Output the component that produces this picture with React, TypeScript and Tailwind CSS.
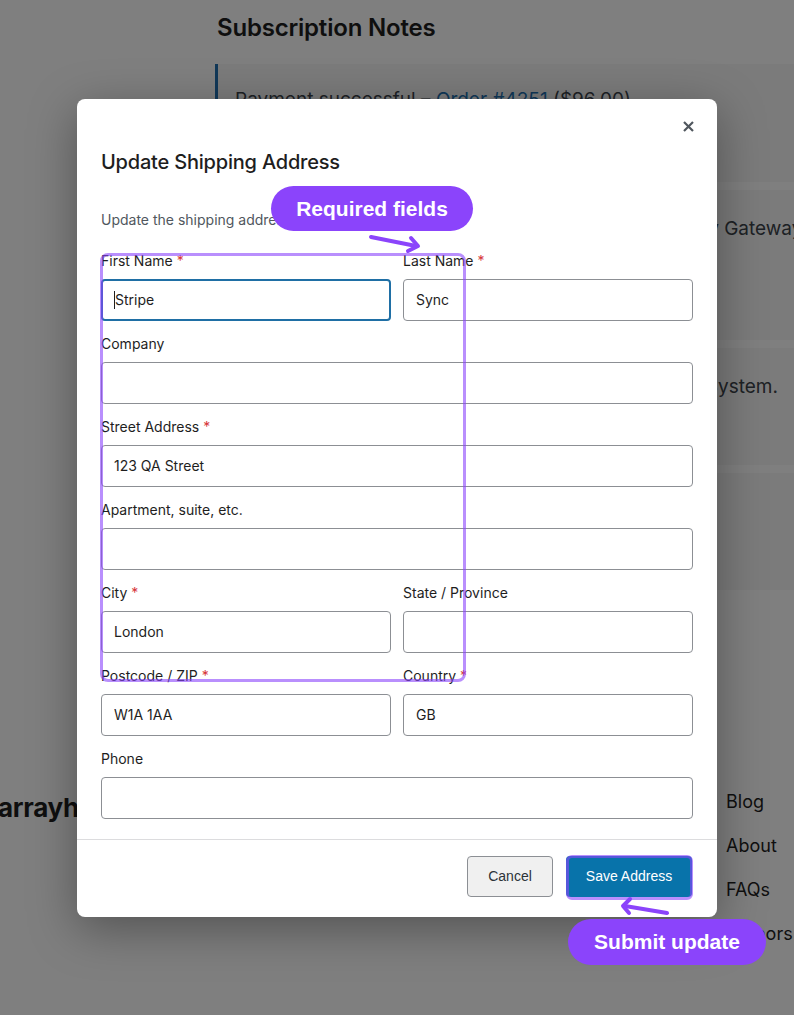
import React from "react";

type FieldProps = {
  label: string;
  required?: boolean;
  value?: string;
  focused?: boolean;
  wide?: boolean;
};

function Field({ label, required, value = "", focused, wide }: FieldProps) {
  return (
    <div className={wide ? "col-span-2 flex flex-col" : "flex flex-col"}>
      <label className="h-5 text-[14px] leading-5 font-normal text-[#1e1e1e]">
        {label}
        {required && <span className="ml-1 text-[#d63638]">*</span>}
      </label>
      <div className="relative mt-2">
        <input
          readOnly
          value={value}
          className={
            focused
              ? "h-[42px] w-full rounded-[4px] border-2 border-[#1f6fa5] bg-white pl-[12px] text-[14px] text-[#1e1e1e] outline-none"
              : "h-[42px] w-full rounded-[4px] border border-[#8c8f94] bg-white pl-[12px] text-[14px] text-[#1e1e1e] outline-none"
          }
        />
        {focused && <span className="absolute left-[13px] top-[12px] h-[18px] w-px bg-[#1e1e1e]" />}
      </div>
    </div>
  );
}

function NoteCard({ text, link, tail, h, pt }: { text: string; link?: string; tail?: string; h: string; pt: string }) {
  return (
    <div className={`${h} ${pt} border-l-[3px] border-[#2271b1] bg-[#f6f7f7] pl-[17px]`}>
      <p className="whitespace-nowrap text-[19px] leading-7 text-[#3c434a]">
        {text}
        {link && <span className="text-[#2271b1] underline">{link}</span>}
        {tail}
      </p>
    </div>
  );
}

function BackgroundPage() {
  return (
    <div className="absolute left-0 top-0 w-[1000px] bg-white font-['Inter',sans-serif] text-[#1e1e1e]">
      <div className="pl-[215px] pt-[14px]">
        <h2 className="pl-[2px] text-[24px] leading-7 font-semibold tracking-[-0.2px]">Subscription Notes</h2>
        <div className="mt-[22px] flex w-[780px] flex-col gap-2">
          <NoteCard h="h-[118px]" pt="pt-[22px]" text="Payment successful – " link="Order #4251" tail=" ($96.00)" />
          <NoteCard h="h-[150px]" pt="pt-[25px]" text="Subscription state changed from Pending to Active by Gateway." />
          <NoteCard h="h-[117px]" pt="pt-[25px]" text="Shipping address synched from Stripe Sync’s billing System." />
          <NoteCard h="h-[117px]" pt="pt-[25px]" text="Renewal reminder email sent to customer." />
        </div>
      </div>
      <footer className="mt-[198px] flex items-start">
        <div className="-ml-[2px] w-[728px] shrink-0 pt-[2px] text-[26px] leading-9 font-bold tracking-[-0.3px]">arrayhub</div>
        <nav className="flex flex-col gap-4 text-[18px] leading-7">
          <span>Blog</span>
          <span>About</span>
          <span>FAQs</span>
          <span>Authors</span>
        </nav>
      </footer>
    </div>
  );
}

function Modal() {
  return (
    <div className="relative w-[640px] rounded-[8px] bg-white font-['Inter',sans-serif] shadow-[0_12px_48px_rgba(0,0,0,0.35)]">
      <button className="absolute right-[19px] top-[18px] flex h-5 w-5 items-center justify-center text-[#50575e]">
        <svg width="11" height="11" viewBox="0 0 11 11" fill="none" stroke="currentColor" strokeWidth="2.2">
          <path d="M1 1L10 10M10 1L1 10" />
        </svg>
      </button>
      <div className="px-6 pt-[49px] pb-5">
        <h2 className="text-[20px] leading-7 font-medium tracking-[-0.2px] text-[#1e1e1e]">Update Shipping Address</h2>
        <p className="mt-[34px] text-[14px] leading-5 text-[#50575e]">Update the shipping address for this subscription.</p>
        <div className="mt-[21px] grid grid-cols-2 gap-x-3 gap-y-[13px]">
          <Field label="First Name" required value="Stripe" focused />
          <Field label="Last Name" required value="Sync" />
          <Field label="Company" wide />
          <Field label="Street Address" required value="123 QA Street" wide />
          <Field label="Apartment, suite, etc." wide />
          <Field label="City" required value="London" />
          <Field label="State / Province" />
          <Field label="Postcode / ZIP" required value="W1A 1AA" />
          <Field label="Country" required value="GB" />
          <Field label="Phone" wide />
        </div>
      </div>
      <div className="flex justify-end gap-[13px] border-t border-[#dcdcde] pt-4 pb-5 pl-6 pr-[25px] font-['Liberation_Sans',Arial,sans-serif] text-[14px]">
        <button className="h-[41px] w-[86px] rounded-[4px] border border-[#8c8f94] bg-[#f0f0f0] text-[#2c3338]">Cancel</button>
        <button className="h-[41px] w-[126px] rounded-[4px] bg-[#0873aa] text-white">Save Address</button>
      </div>
    </div>
  );
}

function Annotations() {
  return (
    <>
      {/* highlight outlines */}
      <div className="absolute left-[100px] top-[253px] h-[429px] w-[366px] rounded-[8px] border-[3px] border-[#8b44fb]/60" />
      <div className="absolute left-[566px] top-[855px] h-[45px] w-[127px] rounded-[6px] border-[3px] border-[#8b44fb]/60" />

      {/* arrows */}
      <svg className="absolute left-0 top-0" width="794" height="1015" viewBox="0 0 794 1015" fill="none">
        <g stroke="#8b44fb" strokeWidth="4" strokeLinecap="round" strokeLinejoin="round">
          <path d="M371 237L416 246" />
          <path d="M411 238L418 246L408 251" />
          <path d="M667 913L625 906" />
          <path d="M630 899L623 906L629 913" />
        </g>
      </svg>

      {/* labels */}
      <div className="absolute left-[271px] top-[186px] flex h-[45px] w-[202px] items-center justify-center rounded-full bg-[#8b44fb] font-['Liberation_Sans',Arial,sans-serif] text-[21px] font-bold text-white">
        Required fields
      </div>
      <div className="absolute left-[568px] top-[919px] flex h-[46px] w-[198px] items-center justify-center rounded-full bg-[#8b44fb] font-['Liberation_Sans',Arial,sans-serif] text-[21px] font-bold text-white">
        Submit update
      </div>
    </>
  );
}

export default function App() {
  return (
    <div className="relative h-[1015px] w-[794px] overflow-hidden bg-white">
      <BackgroundPage />
      <div className="absolute inset-0 bg-black/50" />
      <div className="absolute inset-0 flex items-center justify-center">
        <Modal />
      </div>
      <Annotations />
    </div>
  );
}
